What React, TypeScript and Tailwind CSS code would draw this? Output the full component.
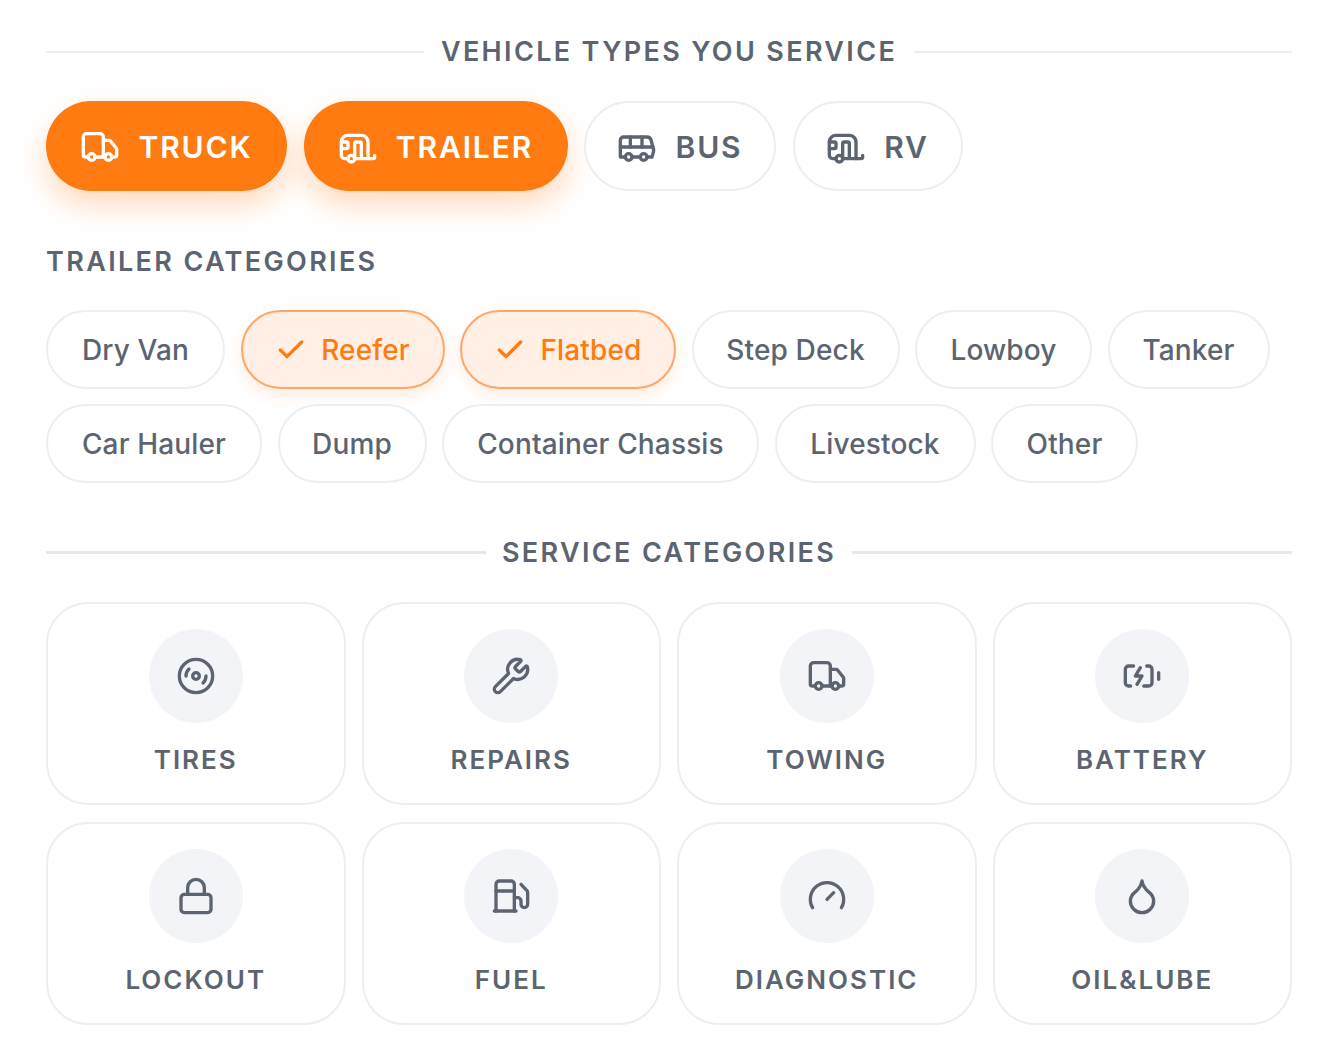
import { Truck, Caravan, Bus, Check, Disc3, Wrench, BatteryCharging, Lock, Fuel, Gauge, Droplet } from "lucide-react";

const vehicles = [
  { name: "TRUCK", icon: Truck, active: true, width: "w-[241px]" },
  { name: "TRAILER", icon: Caravan, active: true, width: "w-[264px]" },
  { name: "BUS", icon: Bus, active: false, width: "w-[192px]" },
  { name: "RV", icon: Caravan, active: false, width: "w-[170px]" },
];

const trailerRows = [
  [
    { name: "Dry Van", width: "w-[179px]" },
    { name: "Reefer", width: "w-[204px]", active: true },
    { name: "Flatbed", width: "w-[216px]", active: true },
    { name: "Step Deck", width: "w-[208px]" },
    { name: "Lowboy", width: "w-[177px]" },
    { name: "Tanker", width: "w-[162px]" },
  ],
  [
    { name: "Car Hauler", width: "w-[216px]" },
    { name: "Dump", width: "w-[149px]" },
    { name: "Container Chassis", width: "w-[317px]" },
    { name: "Livestock", width: "w-[201px]" },
    { name: "Other", width: "w-[147px]" },
  ],
];

const services = [
  { name: "TIRES", icon: Disc3 },
  { name: "REPAIRS", icon: Wrench },
  { name: "TOWING", icon: Truck },
  { name: "BATTERY", icon: BatteryCharging },
  { name: "LOCKOUT", icon: Lock },
  { name: "FUEL", icon: Fuel },
  { name: "DIAGNOSTIC", icon: Gauge },
  { name: "OIL&LUBE", icon: Droplet },
];

export default function App() {
  return (
    <div className="min-h-[1052px] bg-white pl-[46px] pr-[45px] pt-[36px] font-['Inter',sans-serif] text-[#5b6470]">
      {/* Vehicle types */}
      <div className="flex h-[32px] items-center">
        <div className="h-[2px] flex-1 bg-[#eceef1]" />
        <span className="px-[17px] text-[27px] font-semibold tracking-[2.35px]">VEHICLE TYPES YOU SERVICE</span>
        <div className="h-[2px] flex-1 bg-[#eceef1]" />
      </div>

      <div className="mt-[33px] flex gap-[16.5px]">
        {vehicles.map((v) => (
          <div
            key={v.name}
            className={
              v.active
                ? `flex h-[90px] ${v.width} items-center justify-center gap-[18px] rounded-full bg-[#ff7a10] pt-[2px] text-white shadow-[0_14px_30px_rgba(255,122,16,0.28)]`
                : `flex h-[90px] ${v.width} items-center justify-center gap-[18px] rounded-full border-2 border-[#eceef1] bg-white pt-[2px]`
            }
          >
            <v.icon size={40} strokeWidth={2} />
            <span className="text-[30px] font-semibold tracking-[1.9px]">{v.name}</span>
          </div>
        ))}
      </div>

      {/* Trailer categories */}
      <div className="mt-[55px] flex h-[30px] items-center pt-[2px] text-[27px] font-semibold tracking-[2.35px]">
        TRAILER CATEGORIES
      </div>

      <div className="mt-[34px] flex flex-col gap-[15px]">
        {trailerRows.map((row, i) => (
          <div key={i} className="flex gap-[15.5px]">
            {row.map((p) => (
              <div
                key={p.name}
                className={
                  p.active
                    ? `flex h-[79px] ${p.width} items-center justify-center gap-[14px] rounded-full border-2 border-[#ffa667] bg-[#ffefe4] text-[#ff7a10] shadow-[0_6px_16px_rgba(255,122,16,0.14)]`
                    : `flex h-[79px] ${p.width} items-center justify-center rounded-full border-2 border-[#eceef1] bg-white`
                }
              >
                {p.active && <Check size={32} strokeWidth={2.5} />}
                <span className="text-[28px] font-medium tracking-[0.15px]">{p.name}</span>
              </div>
            ))}
          </div>
        ))}
      </div>

      {/* Service categories */}
      <div className="mt-[54px] flex h-[30px] items-center">
        <div className="h-[3px] flex-1 bg-[#e6e8ec]" />
        <span className="px-[16px] pt-[2px] text-[27px] font-semibold tracking-[2.35px]">SERVICE CATEGORIES</span>
        <div className="h-[3px] flex-1 bg-[#e6e8ec]" />
      </div>

      <div className="mt-[35px] grid grid-cols-4 gap-x-[16px] gap-y-[16.5px]">
        {services.map((s) => (
          <div
            key={s.name}
            className="flex h-[203px] flex-col items-center rounded-[42px] border-2 border-[#eceef1] bg-white pt-[25px]"
          >
            <div className="flex h-[94px] w-[94px] items-center justify-center rounded-full bg-[#f3f4f8]">
              <s.icon size={40} strokeWidth={2} />
            </div>
            <span className="mt-[17px] text-[26px] font-semibold tracking-[2px]">{s.name}</span>
          </div>
        ))}
      </div>
    </div>
  );
}
